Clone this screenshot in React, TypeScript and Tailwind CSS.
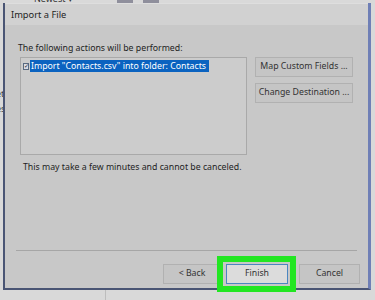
import React from 'react';

const font = { fontFamily: '"Noto Sans", "Open Sans", sans-serif' };

function WinButton({ label, className = '' }: { label: string; className?: string }) {
  return (
    <div
      className={`h-[20px] flex items-center justify-center whitespace-nowrap bg-[#c5c5c5] border border-[#b1b1b1] text-[8.75px] text-[#333] ${className}`}
    >
      {label}
    </div>
  );
}

export default function App() {
  return (
    <div className="w-[375px] h-[300px] bg-[#d9d9d9] overflow-hidden relative" style={font}>
      {/* app behind the dialog */}
      <div className="h-[3px] flex items-end text-[9px] leading-none text-[#333] overflow-hidden">
        <span className="ml-[34px]">Newest ▾</span>
        <div className="ml-[44px] w-[16px] h-[3px] bg-[#8f8f9c]" />
        <div className="ml-[10px] w-[16px] h-[3px] bg-[#8f8f9c]" />
      </div>
      <div className="absolute left-0 top-[86px] text-[9px] leading-[15px] text-[#444] -ml-[4px]">
        <div>et</div>
        <div>es</div>
      </div>

      {/* dialog */}
      <div className="ml-[3px] w-[368px] h-[287px] border-l-[2px] border-b-[2px] border-r-[3px] border-[#4a5574] border-r-[#6f7fb6] bg-[#c8c8c8] flex flex-col relative z-10">
        <div className="h-[22px] bg-[#d1d1d1] border-t border-[#dedede] flex items-center pl-[6px] text-[9.3px] text-[#1e1e1e]">
          Import a File
        </div>
        <div className="flex-1 flex flex-col pl-[13px] pr-[8px] pt-[15px]">
          <div className="text-[8.75px] leading-[16px] text-[#1e1e1e]">
            The following actions will be performed:
          </div>
          <div className="flex mt-[1px] pl-[2px]">
            <div className="w-[227px] h-[98px] border border-[#a9a9a9] bg-[#cccccc] pt-[2px] pl-[2px]">
              <div className="flex items-center h-[12px]">
                <div className="w-[6px] h-[7px] border border-[#5a6a80] bg-[#d8dce4] mr-[1px] flex items-center justify-center text-[6px] leading-none text-[#223]">
                  ✓
                </div>
                <div className="h-[12px] bg-[#0b63c0] text-white text-[8.75px] leading-[12px] pl-[1px] pr-[3px] whitespace-nowrap">
                  Import "Contacts.csv" into folder: Contacts
                </div>
              </div>
            </div>
            <div className="ml-[8px] flex flex-col gap-[6px]">
              <WinButton label="Map Custom Fields ..." className="w-[98px]" />
              <WinButton label="Change Destination ..." className="w-[98px]" />
            </div>
          </div>
          <div className="mt-[4px] pl-[5px] text-[8.75px] leading-[16px] text-[#1e1e1e]">
            This may take a few minutes and cannot be canceled.
          </div>
          <div className="mt-[75px] ml-[-2px] mr-[3px] h-[1px] bg-[#a6a6a6]" />
          <div className="mt-[12px] flex justify-end items-center">
            <WinButton label="< Back" className="w-[58px]" />
            <div className="border-[6px] border-[#22e622] -ml-[4px] -my-[7px] p-[2px] pl-[3px]">
              <div className="w-[62px] h-[20px] flex items-center justify-center bg-[#dcdcdc] border border-[#4b86c0] text-[8.75px] text-[#333]">
                Finish
              </div>
            </div>
            <WinButton label="Cancel" className="w-[61px] ml-[3px]" />
          </div>
        </div>
      </div>
      <div className="absolute left-[105px] top-[290px] w-[1px] h-[10px] bg-[#bdbdbd]" />
    </div>
  );
}
